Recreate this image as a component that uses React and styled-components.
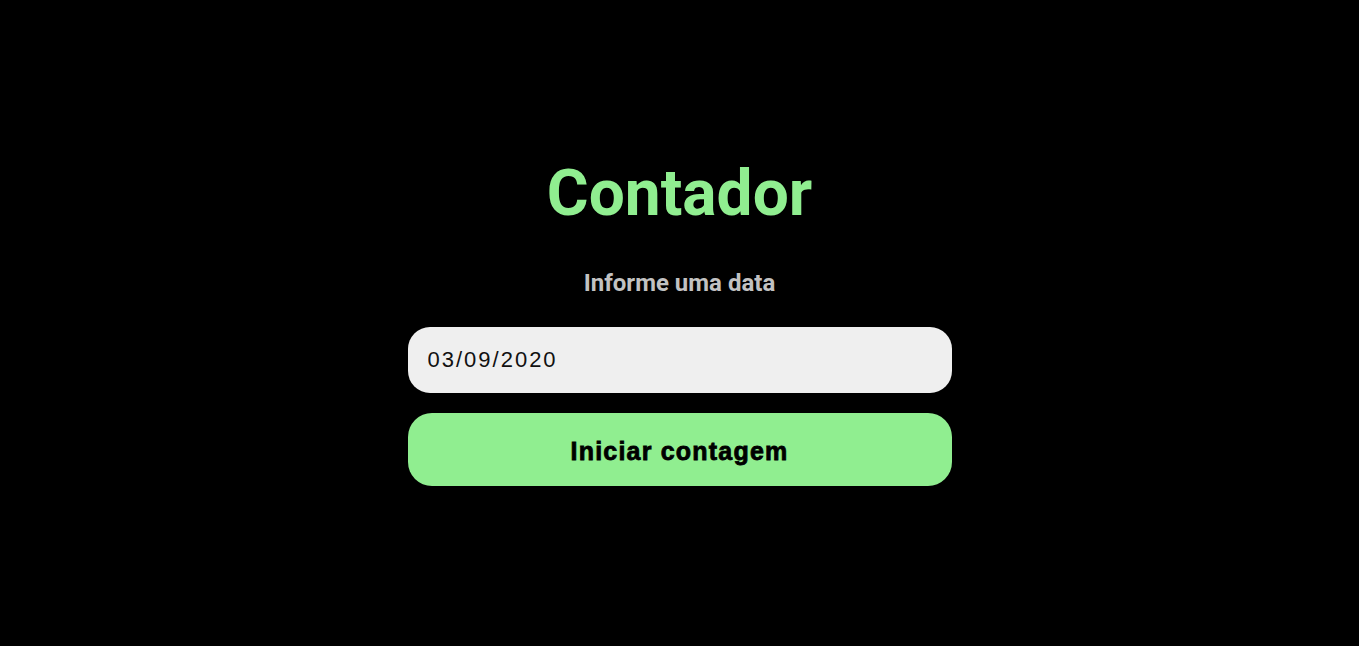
import React, { useState } from 'react';
import styled, { createGlobalStyle } from 'styled-components';

const GlobalStyle = createGlobalStyle`
  * {
    box-sizing: border-box;
  }

  body {
    margin: 0;
    background: #000;
    font-family: 'Roboto', 'Liberation Sans', sans-serif;
  }
`;

const Page = styled.main`
  height: 100vh;
  padding-bottom: 4px;
  display: flex;
  align-items: center;
  justify-content: center;
`;

const Form = styled.form`
  width: 544px;
  display: flex;
  flex-direction: column;
  align-items: center;
`;

const Title = styled.h1`
  margin: 0;
  font-family: 'Roboto', sans-serif;
  font-size: 64px;
  font-weight: 700;
  line-height: 75px;
  color: #90ee90;
`;

const Label = styled.label`
  margin-top: 38px;
  font-family: 'Roboto', sans-serif;
  font-size: 24px;
  font-weight: 700;
  color: #c2c2c2;
`;

const DateInput = styled.input`
  margin-top: 30px;
  width: 100%;
  height: 66px;
  padding: 0 20px;
  border: none;
  border-radius: 22px;
  background: #efefef;
  font-family: 'Liberation Sans', Arial, sans-serif;
  font-size: 22px;
  letter-spacing: 2px;
  color: #111;
  outline: none;
`;

const StartButton = styled.button`
  margin-top: 20px;
  width: 100%;
  height: 73px;
  padding: 3px 0 0;
  border: none;
  border-radius: 24px;
  background: #90ee90;
  font-family: 'Liberation Sans', Arial, sans-serif;
  font-size: 25px;
  font-weight: 700;
  letter-spacing: 1.2px;
  color: #000;
  -webkit-text-stroke: 0.8px #000;
  cursor: pointer;
`;

const App = () => {
  const [date, setDate] = useState('03/09/2020');

  return (
    <>
      <GlobalStyle />
      <Page>
        <Form onSubmit={(e) => e.preventDefault()}>
          <Title>Contador</Title>
          <Label htmlFor="data">Informe uma data</Label>
          <DateInput id="data" value={date} onChange={(e) => setDate(e.target.value)} />
          <StartButton type="submit">Iniciar contagem</StartButton>
        </Form>
      </Page>
    </>
  );
};

export default App;
